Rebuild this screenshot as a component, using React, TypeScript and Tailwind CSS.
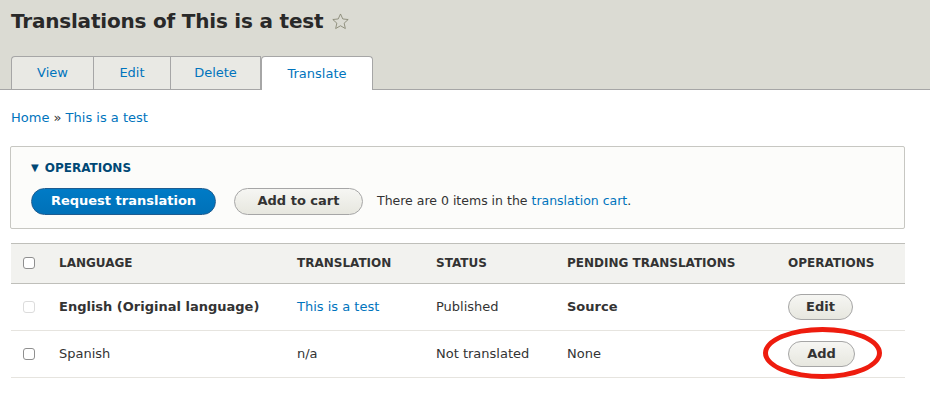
import React from "react";

/**
 * Translations overview — Drupal Seven style content translation page.
 */

const font = { fontFamily: '"DejaVu Sans", "Lucida Grande", sans-serif' };

function Tab({ label, width, active }: { label: string; width: string; active?: boolean }) {
  return (
    <a
      className={
        active
          ? `relative -mb-px flex h-[34px] items-center justify-center rounded-t-[4px] border border-b-0 border-[#a6a6a6] bg-white text-[13px] text-[#0074bd] ${width}`
          : `flex h-[33px] items-center justify-center border-l border-t border-[#a6a6a6] bg-[#e9e9e4] text-[13px] text-[#0074bd] first:rounded-tl-[4px] ${width}`
      }
    >
      {label}
    </a>
  );
}

function Checkbox({ faint }: { faint?: boolean }) {
  return (
    <span
      className={
        faint
          ? "block h-[12px] w-[12px] rounded-[3px] border border-[#dcdcdc] bg-white"
          : "block h-[12px] w-[12px] rounded-[3px] border border-[#8f8f8f] bg-white"
      }
    />
  );
}

function PillButton({ children, width }: { children: React.ReactNode; width: string }) {
  return (
    <button
      className={`h-[26px] rounded-full border border-[#a6a6a6] bg-gradient-to-b from-[#f6f6f3] to-[#e7e7df] text-[13px] font-bold text-[#333] ${width}`}
    >
      {children}
    </button>
  );
}

export default function App() {
  return (
    <div className="h-[404px] w-[930px] overflow-hidden bg-white text-[#333]" style={font}>
      <header className="bg-[#dbdbd3]">
        <div className="flex items-center gap-[8px] px-[11px] pt-[6px]">
          <h1 className="text-[20px] font-bold leading-[30px] tracking-[-0.2px] text-[#292929]">
            Translations of This is a test
          </h1>
          <svg width="19" height="19" viewBox="0 0 24 24" className="mt-[1px]">
            <path
              d="M12 2.5l2.9 6.3 6.8.7-5.1 4.6 1.5 6.8L12 17.4l-6.1 3.5 1.5-6.8-5.1-4.6 6.8-.7z"
              fill="none"
              stroke="#868672"
              strokeWidth="1.1"
              strokeLinejoin="round"
            />
          </svg>
        </div>
        <nav className="mt-[20px] flex items-end border-b border-[#a6a6a6] px-[11px]">
          <div className="flex border-r border-[#a6a6a6]">
            <Tab label="View" width="w-[82px]" />
            <Tab label="Edit" width="w-[77px]" />
            <Tab label="Delete" width="w-[90px]" />
          </div>
          <Tab label="Translate" width="w-[112px]" active />
        </nav>
      </header>

      <div className="px-[11px] pt-[18px] text-[13px]">
        <a className="text-[#0074bd]">Home</a> » <a className="text-[#0074bd]">This is a test</a>
      </div>

      <fieldset className="mx-[10px] mt-[18px] w-[895px] rounded-[2px] border border-[#c7c7c2] bg-[#fcfcfa] px-[20px] pb-[13px] pt-[12px]">
        <div className="flex items-center gap-[6px] text-[12px] font-bold uppercase text-[#004875]">
          <span className="text-[10px]">▼</span>OPERATIONS
        </div>
        <div className="mt-[11px] flex items-center">
          <button className="h-[27px] w-[185px] rounded-full border border-[#1e5c90] bg-gradient-to-b from-[#007bc6] to-[#0071b8] text-[13px] font-bold text-white">
            Request translation
          </button>
          <button className="ml-[18px] h-[27px] w-[129px] rounded-full border border-[#a6a6a6] bg-gradient-to-b from-[#f6f6f3] to-[#e7e7df] text-[13px] font-bold text-[#333]">
            Add to cart
          </button>
          <span className="ml-[14px] text-[12.5px] text-[#333]">
            There are 0 items in the <a className="text-[#0074bd]">translation cart</a>.
          </span>
        </div>
      </fieldset>

      <table className="ml-[11px] mt-[14px] w-[894px] border-collapse text-[13px]">
        <thead>
          <tr className="h-[40px] border-y border-[#bfbfba] bg-[#f2f2ef] text-left text-[12px] font-bold uppercase text-[#333]">
            <th className="w-[48px] pl-[12px]"><Checkbox /></th>
            <th className="w-[238px]">Language</th>
            <th className="w-[139px]">Translation</th>
            <th className="w-[131px]">Status</th>
            <th className="w-[221px]">Pending translations</th>
            <th>Operations</th>
          </tr>
        </thead>
        <tbody>
          <tr className="h-[47px] border-b border-[#e6e4df]">
            <td className="pl-[12px]"><Checkbox faint /></td>
            <td className="font-bold">English (Original language)</td>
            <td><a className="text-[#0074bd]">This is a test</a></td>
            <td>Published</td>
            <td className="font-bold">Source</td>
            <td><PillButton width="w-[65px]">Edit</PillButton></td>
          </tr>
          <tr className="h-[47px] border-b border-[#e6e4df]">
            <td className="pl-[12px]"><Checkbox /></td>
            <td>Spanish</td>
            <td>n/a</td>
            <td>Not translated</td>
            <td>None</td>
            <td className="relative">
              <PillButton width="w-[67px]">Add</PillButton>
              <span className="pointer-events-none absolute left-[-25px] top-[-4px] h-[52px] w-[119px] rounded-[50%] border-[5px] border-[#ee1c0e]" />
            </td>
          </tr>
        </tbody>
      </table>
    </div>
  );
}
